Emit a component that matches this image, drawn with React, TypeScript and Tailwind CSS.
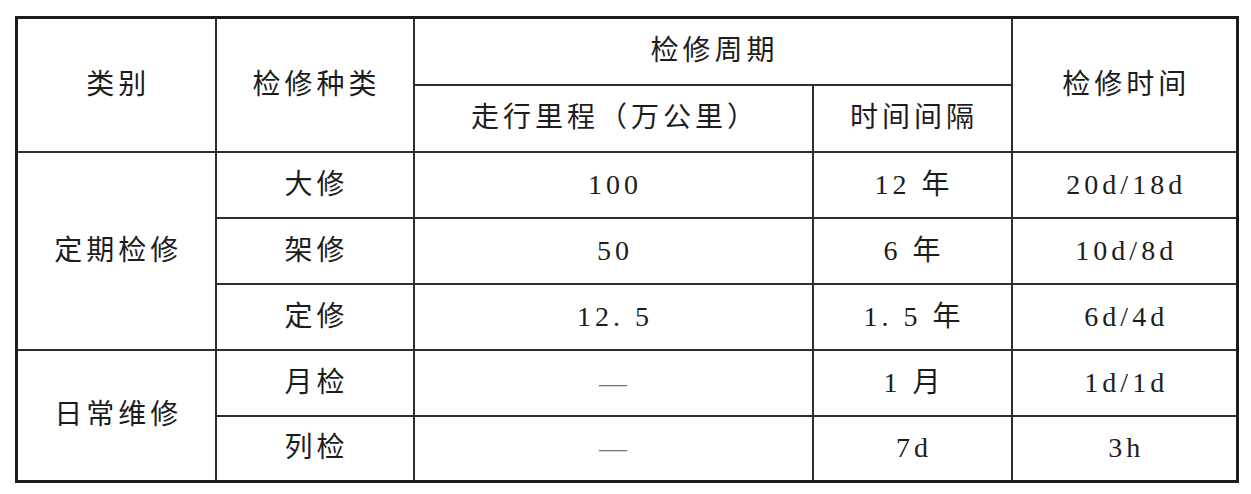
import React from 'react';

interface Row {
  kind: string;
  mileage: string;
  interval: string;
  time: string;
}

const groups: { name: string; rows: Row[] }[] = [
  {
    name: '定期检修',
    rows: [
      { kind: '大修', mileage: '100', interval: '12 年', time: '20d/18d' },
      { kind: '架修', mileage: '50', interval: '6 年', time: '10d/8d' },
      { kind: '定修', mileage: '12. 5', interval: '1. 5 年', time: '6d/4d' },
    ],
  },
  {
    name: '日常维修',
    rows: [
      { kind: '月检', mileage: '—', interval: '1 月', time: '1d/1d' },
      { kind: '列检', mileage: '—', interval: '7d', time: '3h' },
    ],
  },
];

const cell = 'border-2 border-[#2e2e2e] text-center align-middle p-0 pl-[4px] tracking-[4px] font-normal';

const App = () => {
  return (
    <div className="w-[1251px] h-[494px] bg-white pt-[16px] pl-[15px]">
      <table className="table-fixed border-collapse border-[3px] border-[#1c1c1c] text-[28px] leading-none text-[#1d1d1d] font-['Liberation_Serif','DejaVu_Serif','Noto_Sans_CJK_SC',serif]">
        <colgroup>
          <col className="w-[199px]" />
          <col className="w-[198px]" />
          <col className="w-[399px]" />
          <col className="w-[199px]" />
          <col className="w-[226px]" />
        </colgroup>
        <thead>
          <tr className="h-[67px]">
            <th rowSpan={2} className={cell}>类别</th>
            <th rowSpan={2} className={cell}>检修种类</th>
            <th colSpan={2} className={cell}>检修周期</th>
            <th rowSpan={2} className={cell}>检修时间</th>
          </tr>
          <tr className="h-[67px]">
            <th className={cell}>走行里程（万公里）</th>
            <th className={cell}>时间间隔</th>
          </tr>
        </thead>
        <tbody>
          {groups.map((g) =>
            g.rows.map((r, i) => (
              <tr key={g.name + r.kind} className="h-[66px]">
                {i === 0 && (
                  <td rowSpan={g.rows.length} className={cell}>
                    {g.name}
                  </td>
                )}
                <td className={cell}>{r.kind}</td>
                <td className={`${cell} ${r.mileage === '—' ? 'text-[#777]' : ''}`}>{r.mileage}</td>
                <td className={cell}>{r.interval}</td>
                <td className={cell}>{r.time}</td>
              </tr>
            ))
          )}
        </tbody>
      </table>
    </div>
  );
};

export default App;
